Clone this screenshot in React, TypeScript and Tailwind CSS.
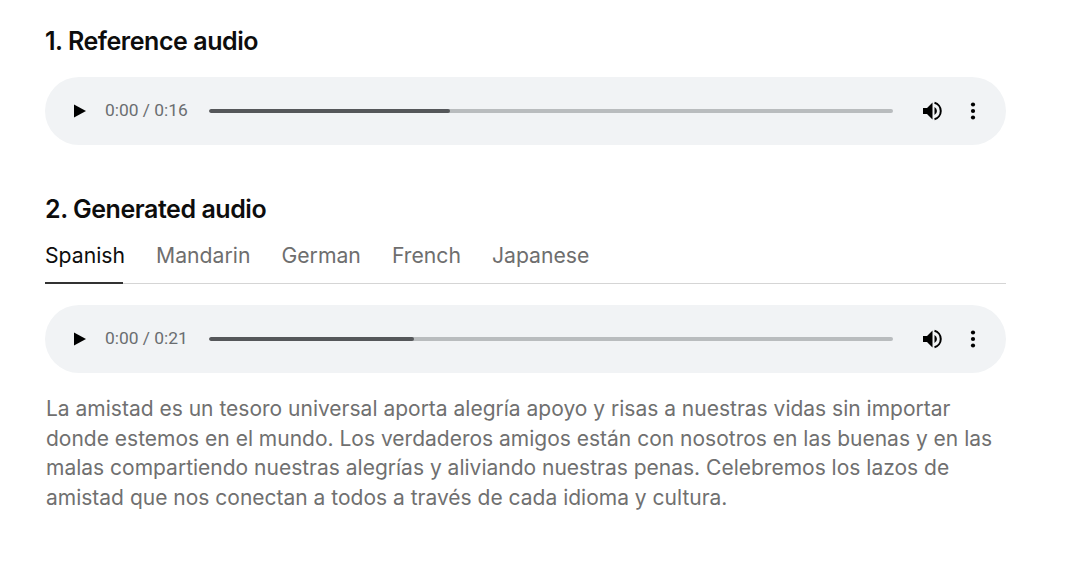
const font = "font-['Inter','Liberation_Sans',sans-serif]";

function Player({ time, progress }: { time: string; progress: number }) {
  return (
    <div className="flex h-[68px] w-[961px] items-center rounded-[34px] bg-[#f1f3f5] pl-[28px]">
      <svg width="14" height="14" viewBox="0 0 14 14" className="shrink-0 text-black">
        <path d="M1 0.5 L13 7 L1 13.5 Z" fill="currentColor" />
      </svg>
      <span className="ml-[18px] w-[83px] shrink-0 whitespace-nowrap font-['Roboto',sans-serif] text-[17.4px] leading-none text-[#6a6d70]">
        {time}
      </span>
      <div className="ml-[21px] flex h-[4px] w-[684px] shrink-0 overflow-hidden rounded-full bg-[#b9bcbe]">
        <div className="h-full rounded-full bg-[#55575a]" style={{ width: `${progress}px` }} />
      </div>
      <svg width="22" height="22" viewBox="0 0 22 22" className="ml-[29px] shrink-0 text-black">
        <path d="M1 8 H5 L10.5 2.5 V19.5 L5 14 H1 Z" fill="currentColor" />
        <path d="M12.5 7 A4.5 4.5 0 0 1 12.5 15 Z" fill="currentColor" />
        <path d="M12.5 2.8 A8.5 8.5 0 0 1 12.5 19.2" fill="none" stroke="currentColor" strokeWidth="2" />
      </svg>
      <svg width="6" height="20" viewBox="0 0 6 20" className="ml-[26px] shrink-0 text-black">
        <circle cx="3" cy="3.5" r="2.1" fill="currentColor" />
        <circle cx="3" cy="10" r="2.1" fill="currentColor" />
        <circle cx="3" cy="16.5" r="2.1" fill="currentColor" />
      </svg>
    </div>
  );
}

export default function App() {
  const tabs = ["Mandarin", "German", "French", "Japanese"];
  return (
    <div className={`${font} h-[565px] w-[1068px] overflow-hidden bg-white pl-[45px] pt-[26px]`}>
      <h2 className="text-[25px] font-semibold leading-[30px] tracking-[-0.018em] text-[#0d0d0d]">1. Reference audio</h2>
      <div className="mt-[21px]">
        <Player time="0:00 / 0:16" progress={241} />
      </div>
      <h2 className="mt-[49px] text-[25px] font-semibold leading-[30px] tracking-[-0.018em] text-[#0d0d0d]">2. Generated audio</h2>
      <div className="mt-[16px] flex h-[44px] w-[961px] gap-[31px] border-b border-[#d5d5d5] text-[21.2px] leading-[30px]">
        <div className="relative text-[#0d0d0d]">
          Spanish
          <div className="absolute bottom-[-1px] left-0 h-[2px] w-[78px] bg-[#333]" />
        </div>
        {tabs.map((t) => (
          <div key={t} className="text-[#6e6e6e]">{t}</div>
        ))}
      </div>
      <div className="mt-[21px]">
        <Player time="0:00 / 0:21" progress={205} />
      </div>
      <p className="mt-[21px] w-[961px] pl-px text-[21px] leading-[29.7px] text-[#707070]">
        La amistad es un tesoro universal aporta alegría apoyo y risas a nuestras vidas sin importar<br />
        donde estemos en el mundo. Los verdaderos amigos están con nosotros en las buenas y en las<br />
        malas compartiendo nuestras alegrías y aliviando nuestras penas. Celebremos los lazos de<br />
        amistad que nos conectan a todos a través de cada idioma y cultura.
      </p>
    </div>
  );
}
